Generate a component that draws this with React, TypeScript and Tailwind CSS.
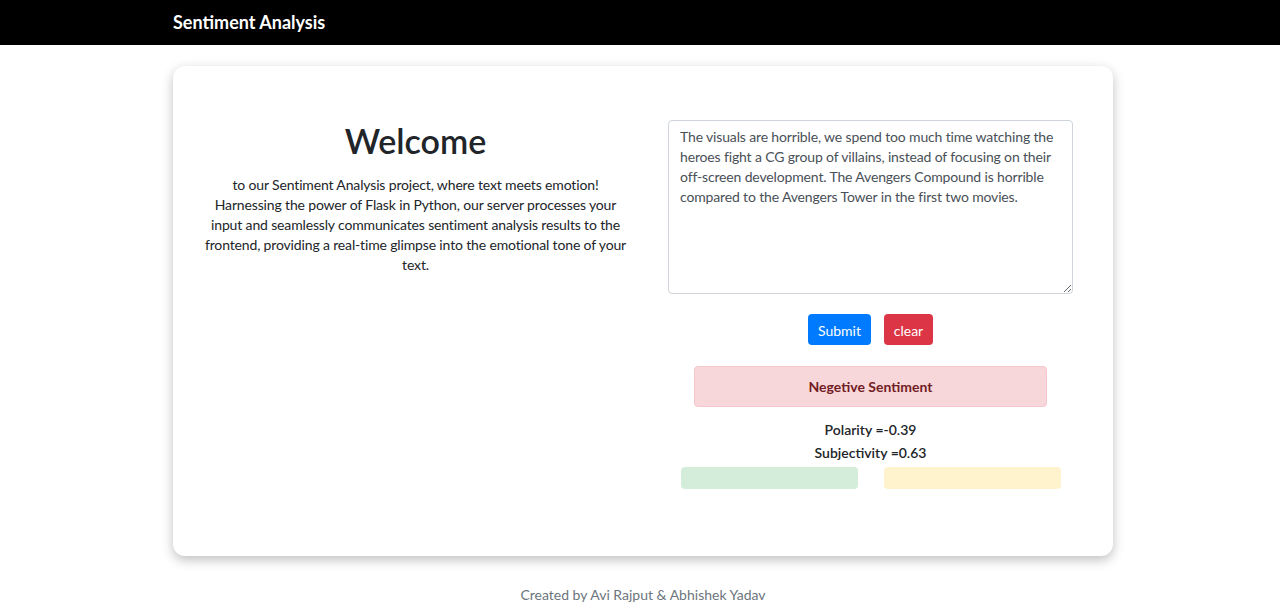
import React from "react";

export default function App() {
  const font = { fontFamily: 'Lato, "Open Sans", sans-serif' };
  return (
    <div className="min-h-[612px] bg-white text-[#212529]" style={font}>
      <nav className="h-[45px] bg-black flex items-center">
        <div className="ml-[173px] text-white font-bold text-[18px]">Sentiment Analysis</div>
      </nav>
      <main className="pt-[21px]">
        <div className="ml-[173px] w-[940px] h-[490px] rounded-[12px] bg-white shadow-[0_4px_12px_rgba(0,0,0,0.25)] flex pt-[54px] pl-[15px]">
          <div className="w-[455px] px-[12px] flex flex-col items-center text-center">
            <h1 className="mt-[1px] text-[34px] leading-[40px] font-semibold text-[#212529]">Welcome</h1>
            <p className="mt-[14px] text-[14px] leading-[20px] tracking-[-0.15px] text-[#212529]">
              to our Sentiment Analysis project, where text meets emotion! Harnessing the power of Flask in Python, our server processes your input and seamlessly communicates sentiment analysis results to the frontend, providing a real-time glimpse into the emotional tone of your text.
            </p>
          </div>
          <div className="ml-[25px] w-[405px] flex flex-col items-center">
            <textarea
              className="w-[405px] h-[174px] border border-[#ced4da] rounded-[4px] px-[11px] py-[6px] text-[14px] leading-[20px] tracking-[-0.15px] text-[#495057] resize-y outline-none"
              style={font}
              defaultValue="The visuals are horrible, we spend too much time watching the heroes fight a CG group of villains, instead of focusing on their off-screen development. The Avengers Compound is horrible compared to the Avengers Tower in the first two movies."
            />
            <div className="mt-[20px] flex gap-[13px]">
              <button className="h-[31px] w-[63px] pt-[1px] rounded-[4px] bg-[#007bff] text-white text-[14px]">Submit</button>
              <button className="h-[31px] w-[49px] pt-[1px] rounded-[4px] bg-[#dc3545] text-white text-[14px]">clear</button>
            </div>
            <div className="mt-[21px] w-[353px] h-[41px] rounded-[4px] bg-[#f8d7da] border border-[#f5c6cb] flex items-center justify-center text-[#721c24] font-bold text-[14px]">
              Negetive Sentiment
            </div>
            <div className="mt-[11px] text-[14px] leading-[23px] font-semibold text-center">
              <div>Polarity =-0.39</div>
              <div>Subjectivity =0.63</div>
            </div>
            <div className="mt-[3px] w-[405px] flex justify-between pl-[13px] pr-[12px]">
              <div className="w-[177px] h-[22px] rounded-[4px] bg-[#d4edda]" />
              <div className="w-[177px] h-[22px] rounded-[4px] bg-[#fff3cd]" />
            </div>
          </div>
        </div>
        <footer className="mt-[28px] text-center text-[14px] text-[#6c757d] pl-[6px]">
          Created by Avi Rajput &amp; Abhishek Yadav
        </footer>
      </main>
    </div>
  );
}
